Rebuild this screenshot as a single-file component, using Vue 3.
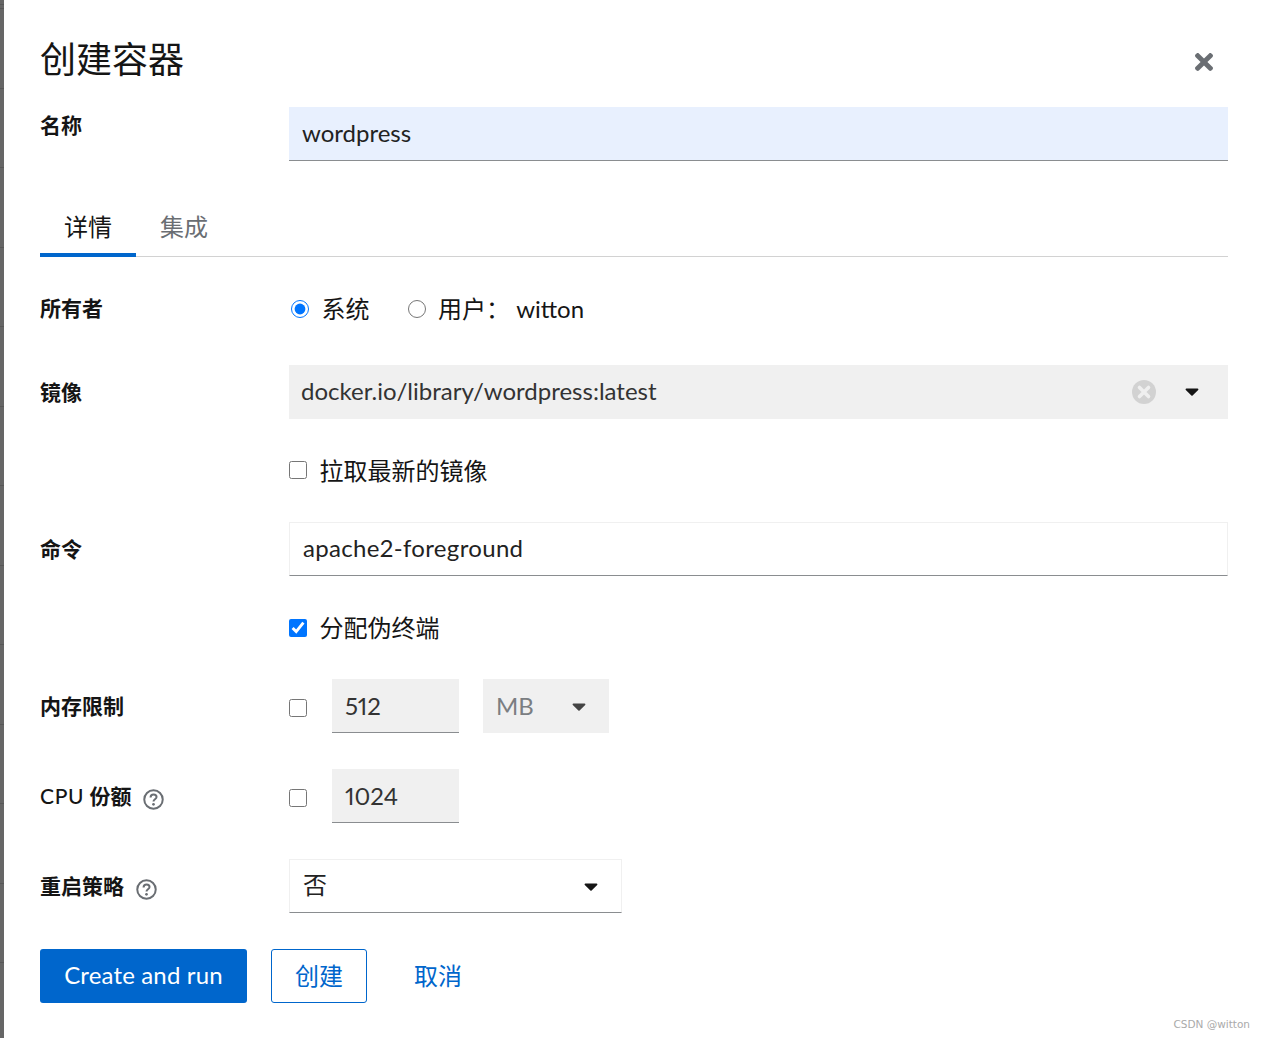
<template>
  <div class="page">
    <div class="backdrop"></div>

    <div class="modal">
      <!-- HEADER -->
      <div class="modal-head">
        <h1 class="modal-title">创建容器</h1>
        <svg class="close-icon" viewBox="0 80 352 352">
          <path d="M242.72 256l100.07-100.07c12.28-12.28 12.28-32.19 0-44.48l-22.24-22.24c-12.28-12.28-32.19-12.28-44.48 0L176 189.28 75.93 89.21c-12.28-12.28-32.19-12.28-44.48 0L9.21 111.45c-12.28 12.28-12.28 32.19 0 44.48L109.28 256 9.21 356.07c-12.28 12.28-12.28 32.19 0 44.48l22.24 22.24c12.28 12.28 32.2 12.28 44.48 0L176 322.72l100.07 100.07c12.28 12.28 32.2 12.28 44.48 0l22.24-22.24c12.28-12.28 12.28-32.19 0-44.48L242.72 256z" />
        </svg>
      </div>

      <!-- NAME -->
      <div class="row name-row">
        <label class="label label-top">名称</label>
        <div class="field autofilled">wordpress</div>
      </div>

      <!-- TABS -->
      <div class="tabs">
        <div class="tab active">详情</div>
        <div class="tab">集成</div>
      </div>

      <!-- FORM -->
      <div class="form">
        <div class="row owner-row">
          <label class="label owner-label">所有者</label>
          <div class="radios">
            <label class="radio-item">
              <input type="radio" name="owner" checked />
              <span>系统</span>
            </label>
            <label class="radio-item">
              <input type="radio" name="owner" />
              <span>用户： witton</span>
            </label>
          </div>
        </div>

        <div class="row">
          <label class="label">镜像</label>
          <div class="field disabled image-field">
            <span class="grow">docker.io/library/wordpress:latest</span>
            <svg class="clear-icon" viewBox="0 0 24 24">
              <circle cx="12" cy="12" r="12" fill="#d2d2d2" />
              <path d="M7.5 7.5l9 9M16.5 7.5l-9 9" stroke="#efefef" stroke-width="3.6" stroke-linecap="round" />
            </svg>
            <svg class="caret image-caret" viewBox="0 180 320 185">
              <path d="M31.3 192h257.3c17.8 0 26.7 21.5 14.1 34.1L174.1 354.8c-7.8 7.8-20.5 7.8-28.3 0L17.2 226.1C4.6 213.5 13.5 192 31.3 192z" />
            </svg>
          </div>
        </div>

        <div class="row check-row">
          <span></span>
          <label class="check-item pull">
            <input type="checkbox" />
            <span>拉取最新的镜像</span>
          </label>
        </div>

        <div class="row">
          <label class="label">命令</label>
          <div class="field outlined wide">apache2-foreground</div>
        </div>

        <div class="row check-row">
          <span></span>
          <label class="check-item">
            <input type="checkbox" checked />
            <span>分配伪终端</span>
          </label>
        </div>

        <div class="row">
          <label class="label">内存限制</label>
          <div class="inline">
            <input type="checkbox" />
            <div class="field disabled small">512</div>
            <div class="unit">
              <span>MB</span>
              <svg class="caret unit-caret" viewBox="0 180 320 185">
                <path d="M31.3 192h257.3c17.8 0 26.7 21.5 14.1 34.1L174.1 354.8c-7.8 7.8-20.5 7.8-28.3 0L17.2 226.1C4.6 213.5 13.5 192 31.3 192z" />
              </svg>
            </div>
          </div>
        </div>

        <div class="row">
          <label class="label">
            <span class="latin">CPU</span>&nbsp;份额
            <svg class="help-icon cpu-help" viewBox="0 0 20 20">
              <circle cx="10" cy="10" r="8.8" />
              <path d="M7.2 8c0-1.8 1.3-2.8 2.9-2.8 1.6 0 2.8 1 2.8 2.4 0 2.2-2.9 2.2-2.9 4.3" />
              <circle class="dot" cx="10" cy="14.6" r="1.3" />
            </svg>
          </label>
          <div class="inline">
            <input type="checkbox" />
            <div class="field disabled small">1024</div>
          </div>
        </div>

        <div class="row">
          <label class="label">
            重启策略
            <svg class="help-icon" viewBox="0 0 20 20">
              <circle cx="10" cy="10" r="8.8" />
              <path d="M7.2 8c0-1.8 1.3-2.8 2.9-2.8 1.6 0 2.8 1 2.8 2.4 0 2.2-2.9 2.2-2.9 4.3" />
              <circle class="dot" cx="10" cy="14.6" r="1.3" />
            </svg>
          </label>
          <div class="field outlined restart">
            <span class="grow">否</span>
            <svg class="caret restart-caret" viewBox="0 180 320 185">
              <path d="M31.3 192h257.3c17.8 0 26.7 21.5 14.1 34.1L174.1 354.8c-7.8 7.8-20.5 7.8-28.3 0L17.2 226.1C4.6 213.5 13.5 192 31.3 192z" />
            </svg>
          </div>
        </div>
      </div>

      <!-- BUTTONS -->
      <div class="actions">
        <button class="btn primary">Create and run</button>
        <button class="btn secondary">创建</button>
        <button class="btn link">取消</button>
      </div>
    </div>

    <div class="watermark">CSDN @witton</div>
  </div>
</template>

<script setup>
</script>

<style>
html,
body {
  margin: 0;
  background: #fff;
}
</style>

<style scoped>
.page {
  position: relative;
  display: flex;
  height: 1038px;
  overflow: hidden;
  background: #fff;
  color: #151515;
  font-family: Lato, "Noto Sans CJK SC", sans-serif;
  font-size: 24px;
  font-variant-numeric: proportional-nums;
}

.backdrop {
  width: 4px;
  flex-shrink: 0;
  background:
    repeating-linear-gradient(180deg, #585858 0, #585858 1px, transparent 1px, transparent 79.5px) 0 8px,
    #666;
}

.modal {
  width: 1188px;
  margin-left: 36px;
  padding-top: 36px;
}

.modal-head {
  display: flex;
  justify-content: space-between;
  align-items: center;
  height: 48px;
  margin-bottom: 23px;
}

.modal-title {
  margin: 0 0 2px;
  font-size: 36px;
  font-weight: 400;
  line-height: 46px;
}

.close-icon {
  width: 18px;
  height: 18px;
  margin-right: 15px;
  margin-top: 4px;
  fill: #6a6e73;
}

.row {
  display: grid;
  grid-template-columns: 249px 1fr;
  align-items: center;
}

.label {
  display: flex;
  align-items: center;
  font-size: 21px;
  font-weight: 700;
  line-height: 30px;
}

.owner-label {
  padding-bottom: 2px;
}

.latin {
  font-weight: 500;
  letter-spacing: 0.7px;
}

.label-top {
  align-self: start;
  padding-top: 3px;
}

.field {
  display: flex;
  align-items: center;
  box-sizing: border-box;
  height: 54px;
  padding: 0 13px 2px;
  line-height: 36px;
  color: #222;
}

.wide {
  letter-spacing: 0.33px;
}

.grow {
  flex: 1;
}

.autofilled {
  background: #e8f0fe;
  border-bottom: 1px solid #8a8d90;
}

.outlined {
  border: 1px solid #f0f0f0;
  border-bottom-color: #8a8d90;
}

.disabled {
  background: #f0f0f0;
  color: #333;
}

.tabs {
  display: flex;
  height: 60px;
  margin-top: 36px;
  box-sizing: border-box;
  border-bottom: 1px solid #d2d2d2;
}

.tab {
  box-sizing: border-box;
  width: 96px;
  height: 60px;
  text-align: center;
  line-height: 60px;
  color: #6a6e73;
}

.tab.active {
  color: #151515;
  border-bottom: 4px solid #06c;
}

.form {
  display: flex;
  flex-direction: column;
  gap: 36px;
  padding-top: 32px;
}

.owner-row {
  height: 40px;
}

.radios {
  display: flex;
  gap: 36px;
}

.radio-item,
.check-item {
  display: flex;
  align-items: center;
  gap: 12.5px;
  line-height: 31px;
}

.radio-item span {
  padding-bottom: 2px;
}

.radio-item input {
  width: 18px;
  height: 18px;
  margin: 0 0 0 2px;
}

input[type="checkbox"] {
  flex-shrink: 0;
  width: 18px;
  height: 18px;
  margin: 0;
}

.pull input[type="checkbox"] {
  margin-bottom: 2px;
}

.inline input[type="checkbox"] {
  margin-top: 3px;
}

.check-row {
  height: 31px;
}

.inline {
  display: flex;
  align-items: center;
}

.small {
  width: 127px;
  margin-left: 25px;
  padding-bottom: 0;
  border-bottom: 1px solid #8a8d90;
}

.unit {
  display: flex;
  align-items: center;
  justify-content: space-between;
  box-sizing: border-box;
  width: 126px;
  height: 54px;
  margin-left: 24px;
  padding: 0 23px 2px 13px;
  background: #f0f0f0;
  color: #7b7e82;
}

.restart {
  width: 333px;
}

.caret {
  flex-shrink: 0;
  width: 14px;
  height: 8px;
  fill: #151515;
}

.image-field {
  padding: 0 29px 2px 12px;
}

.clear-icon {
  width: 24px;
  height: 24px;
  margin-right: 29px;
  margin-top: 2px;
}

.image-caret {
  margin-top: 2px;
}

.unit-caret {
  fill: #444;
  margin-top: 4px;
}

.restart-caret {
  margin-right: 10px;
  margin-top: 4px;
}

.help-icon {
  width: 21px;
  height: 21px;
  margin-left: 12px;
  margin-top: 7px;
  fill: none;
  stroke: #6a6e73;
  stroke-width: 1.9;
}

.help-icon .dot {
  fill: #6a6e73;
  stroke: none;
}

.actions {
  display: flex;
  gap: 24px;
  margin-top: 36px;
}

.btn {
  box-sizing: border-box;
  height: 54px;
  padding: 0 23px 4px;
  border: 1px solid transparent;
  border-radius: 3px;
  background: none;
  font-family: inherit;
  font-size: 24px;
  color: #06c;
}

.primary {
  width: 207px;
  padding-left: 0;
  padding-right: 0;
  background: #06c;
  color: #fff;
  letter-spacing: 0.15px;
}

.secondary {
  border-color: #06c;
}

.link {
  margin-left: -1px;
}

.watermark {
  position: absolute;
  right: 14px;
  bottom: 8px;
  font-family: "DejaVu Sans", sans-serif;
  font-size: 10.5px;
  color: #aaa;
}
</style>
